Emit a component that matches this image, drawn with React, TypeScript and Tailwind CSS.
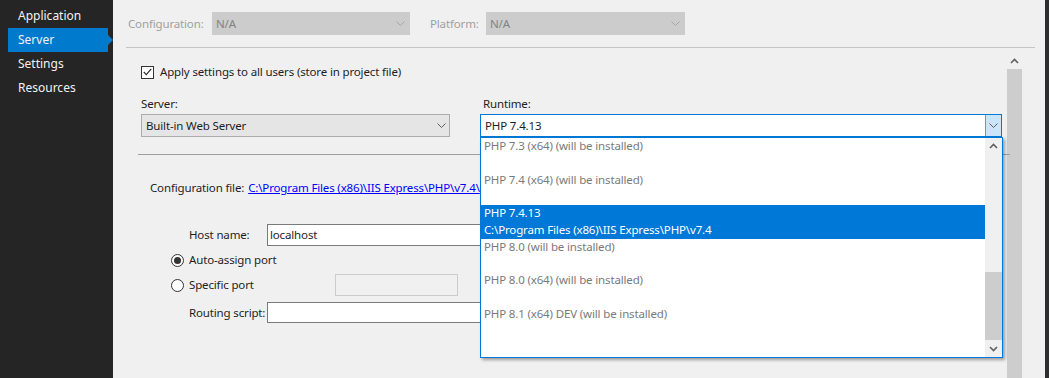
import React from 'react';

function Chevron({ className = '' }: { className?: string }) {
  return (
    <svg width="9" height="5" viewBox="0 0 9 5" className={className}>
      <path d="M0.5 0.5 L4.5 4.5 L8.5 0.5" fill="none" stroke="currentColor" strokeWidth="1" />
    </svg>
  );
}

function ChevronUp({ className = '' }: { className?: string }) {
  return (
    <svg width="9" height="6" viewBox="0 0 9 6" className={className}>
      <path d="M1 5 L4.5 1.5 L8 5" fill="none" stroke="currentColor" strokeWidth="1.6" />
    </svg>
  );
}

function ChevronDown({ className = '' }: { className?: string }) {
  return (
    <svg width="9" height="6" viewBox="0 0 9 6" className={className}>
      <path d="M1 1 L4.5 4.5 L8 1" fill="none" stroke="currentColor" strokeWidth="1.6" />
    </svg>
  );
}

const navItems = ['Application', 'Server', 'Settings', 'Resources'];

const runtimes = [
  { lines: ['PHP 7.3 (x64) (will be installed)'] },
  { lines: ['PHP 7.4 (x64) (will be installed)'] },
  { lines: ['PHP 7.4.13', 'C:\\Program Files (x86)\\IIS Express\\PHP\\v7.4'], selected: true },
  { lines: ['PHP 8.0 (will be installed)'] },
  { lines: ['PHP 8.0 (x64) (will be installed)'] },
  { lines: ['PHP 8.1 (x64) DEV (will be installed)'] },
];

function Radio({ checked }: { checked?: boolean }) {
  return (
    <span className="flex h-[13px] w-[13px] items-center justify-center rounded-full border border-[#333333] bg-white">
      {checked && <span className="h-[7px] w-[7px] rounded-full bg-[#333333]" />}
    </span>
  );
}

export default function App() {
  return (
    <div className="flex h-[378px] w-[1049px] overflow-hidden font-['Noto_Sans',sans-serif] text-[11.5px] tracking-[-0.15px] whitespace-nowrap text-[#1e1e1e]">
      {/* Sidebar */}
      <div className="w-[113px] shrink-0 bg-[#252526] pt-[4px] text-[12px] tracking-normal">
        {navItems.map((item) => (
          <div
            key={item}
            className={`relative ml-[8px] flex h-[24px] w-[100px] items-center pl-[10px] text-[#f1f1f1] ${
              item === 'Server' ? 'bg-[#007acc]' : ''
            }`}
          >
            {item}
            {item === 'Server' && (
              <span className="absolute right-[-5px] top-[7px] h-0 w-0 border-y-[5px] border-l-[5px] border-y-transparent border-l-[#007acc]" />
            )}
          </div>
        ))}
      </div>

      {/* Main */}
      <div className="flex w-[932px] shrink-0 flex-col bg-[#f0f0f0]">
        {/* Top bar */}
        <div className="flex h-[47px] shrink-0 items-center pl-[15px] text-[#a0a0a0]">
          <span className="w-[84px]">Configuration:</span>
          <div className="flex h-[23px] w-[198px] items-center justify-between bg-[#cccccc] px-[4px] text-[#838383]">
            <span>N/A</span>
            <Chevron className="mr-[1px] text-[#a6a6a6]" />
          </div>
          <span className="ml-[20px] w-[56px]">Platform:</span>
          <div className="flex h-[23px] w-[199px] items-center justify-between bg-[#cccccc] px-[4px] text-[#838383]">
            <span>N/A</span>
            <Chevron className="mr-[1px] text-[#a6a6a6]" />
          </div>
        </div>
        <div className="ml-[13px] h-px w-[909px] shrink-0 bg-[#c4c4c4]" />

        {/* Body */}
        <div className="flex flex-1">
          <div className="relative w-[894px] shrink-0 pl-[28px]">
            <div className="mt-[17px] flex h-[14px] items-center">
              <span className="flex h-[13px] w-[13px] items-center justify-center border border-[#333333] bg-white">
                <svg width="9" height="8" viewBox="0 0 9 8">
                  <path d="M0.8 4 L3.3 6.6 L8.2 0.8" fill="none" stroke="#333333" strokeWidth="1.2" />
                </svg>
              </span>
              <span className="ml-[6px]">Apply settings to all users (store in project file)</span>
            </div>

            <div className="mt-[17px] flex">
              <div className="w-[339px]">
                <div className="h-[16px] leading-[16px]">Server:</div>
                <div className="mt-[2px] flex h-[23px] w-[309px] items-center justify-between border border-[#acacac] bg-[#e5e5e5] pl-[4px] pr-[3px]">
                  <span>Built-in Web Server</span>
                  <Chevron className="text-[#606060]" />
                </div>
              </div>
              <div className="relative z-10 w-[522px]">
                <div className="h-[16px] pl-[3px] leading-[16px]">Runtime:</div>
                <div className="mt-[2px] flex h-[23px] items-center justify-between border border-[#0078d7] bg-white pl-[4px]">
                  <span>PHP 7.4.13</span>
                  <div className="flex h-full w-[16px] items-center justify-center border-l border-[#569de5] bg-[#cce4f7]">
                    <Chevron className="text-[#606060]" />
                  </div>
                </div>

                {/* Open list */}
                <div className="absolute left-0 top-[41px] flex h-[221px] w-[523px] border border-[#0078d7] bg-white shadow-[2px_2px_3px_rgba(0,0,0,0.35)]">
                  <div className="flex-1 overflow-hidden">
                    {runtimes.map((r, i) => (
                      <div
                        key={i}
                        className={`h-[33.5px] pl-[3px] leading-[16.75px] ${
                          r.selected ? 'bg-[#0078d7] text-white' : 'text-[#7a7a7a]'
                        }`}
                      >
                        {r.lines.map((l) => (
                          <div key={l}>{l}</div>
                        ))}
                      </div>
                    ))}
                  </div>
                  <div className="flex w-[17px] flex-col bg-[#f0f0f0]">
                    <div className="flex h-[17px] items-center justify-center text-[#606060]">
                      <ChevronUp />
                    </div>
                    <div className="mt-[117px] h-[71px] bg-[#cdcdcd]" />
                    <div className="flex h-[17px] items-center justify-center text-[#606060]">
                      <ChevronDown />
                    </div>
                  </div>
                </div>
              </div>
            </div>

            <div className="ml-[-3px] mt-[17px] h-px w-[872px] bg-[#a0a0a0]" />

            <div className="ml-[9px] mt-[24px] flex h-[18px] items-center">
              <span>Configuration file:</span>
              <span className="ml-[4px] text-[#0000ff] underline">C:\Program Files (x86)\IIS Express\PHP\v7.4\</span>
            </div>

            <div className="mt-[27px] flex h-[22px] items-center">
              <span className="ml-[48px] w-[78px]">Host name:</span>
              <div className="flex h-[22px] w-[300px] items-center border border-[#7a7a7a] bg-white pl-[2px]">localhost</div>
            </div>

            <div className="mt-[4px] flex h-[20px] items-center">
              <span className="ml-[30px]">
                <Radio checked />
              </span>
              <span className="ml-[5px]">Auto-assign port</span>
            </div>

            <div className="mt-[4px] flex h-[22px] items-center">
              <span className="ml-[30px]">
                <Radio />
              </span>
              <span className="ml-[5px] w-[146px]">Specific port</span>
              <div className="h-[22px] w-[123px] border border-[#cccccc] bg-[#f0f0f0]" />
            </div>

            <div className="mt-[6px] flex h-[21px] items-center">
              <span className="ml-[48px] w-[78px]">Routing script:</span>
              <div className="h-[21px] w-[300px] border border-[#7a7a7a] bg-white" />
            </div>
          </div>

          {/* Outer scrollbar */}
          <div className="mt-[5px] flex w-[15px] shrink-0 flex-col">
            <div className="flex h-[16px] items-center justify-center text-[#606060]">
              <ChevronUp />
            </div>
            <div className="flex-1 bg-[#cdcdcd]" />
          </div>
        </div>
      </div>
      <div className="w-[4px] shrink-0 bg-[#2d2d30]" />
    </div>
  );
}
